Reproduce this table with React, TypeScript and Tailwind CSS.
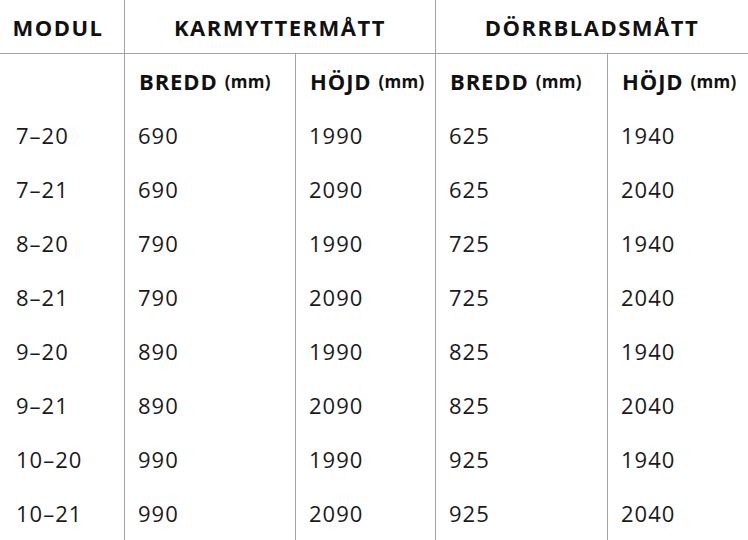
import React from "react";

const rows = [
  ["7–20", "690", "1990", "625", "1940"],
  ["7–21", "690", "2090", "625", "2040"],
  ["8–20", "790", "1990", "725", "1940"],
  ["8–21", "790", "2090", "725", "2040"],
  ["9–20", "890", "1990", "825", "1940"],
  ["9–21", "890", "2090", "825", "2040"],
  ["10–20", "990", "1990", "925", "1940"],
  ["10–21", "990", "2090", "925", "2040"],
];

function SubHead({ label }: { label: string }) {
  return (
    <div className="flex h-[54px] items-center border-l border-[#a3a3a3] pl-[14px] pt-[1px] text-[#111]">
      <span className="text-[22px] font-bold tracking-[0.9px]">{label}</span>
      <span className="ml-[7px] text-[17px] font-bold tracking-[0.3px]">(mm)</span>
    </div>
  );
}

export default function App() {
  return (
    <div
      className="h-[540px] w-[748px] overflow-hidden bg-white"
      style={{ fontFamily: '"Open Sans", "Liberation Sans", sans-serif' }}
    >
      <div className="grid grid-cols-[124px_171px_140px_172px_141px]">
        {/* top header */}
        <div className="flex h-[54px] items-center justify-center border-b border-[#a3a3a3] pr-[8px] pt-[1px] text-[22px] font-bold tracking-[1.5px] text-[#111]">
          MODUL
        </div>
        <div className="col-span-2 flex h-[54px] items-center justify-center border-b border-l border-[#a3a3a3] pt-[1px] text-[22px] font-bold tracking-[1.5px] text-[#111]">
          KARMYTTERMÅTT
        </div>
        <div className="col-span-2 flex h-[54px] items-center justify-center border-b border-l border-[#a3a3a3] pt-[1px] text-[22px] font-bold tracking-[1.5px] text-[#111]">
          DÖRRBLADSMÅTT
        </div>

        {/* sub header */}
        <div className="h-[54px]" />
        <SubHead label="BREDD" />
        <SubHead label="HÖJD" />
        <SubHead label="BREDD" />
        <SubHead label="HÖJD" />

        {rows.map((r) =>
          r.map((cell, i) => (
            <div
              key={r[0] + i}
              className={
                i === 0
                  ? "flex h-[54px] items-center pl-[16px] text-[22px] tracking-[1px] text-[#1a1a1a]"
                  : "flex h-[54px] items-center border-l border-[#a3a3a3] pl-[13px] text-[22px] tracking-[1px] text-[#1a1a1a]"
              }
            >
              {cell}
            </div>
          ))
        )}
      </div>
    </div>
  );
}
